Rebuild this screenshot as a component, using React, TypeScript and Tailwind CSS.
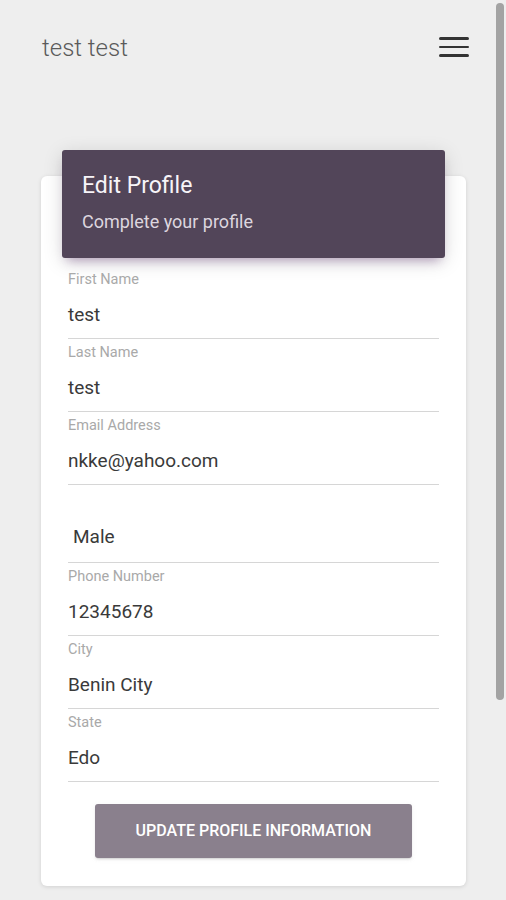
import { useState } from 'react';

interface FieldProps {
    label: string;
    value: string;
}

function Field({ label, value }: FieldProps) {
    return (
        <div className="pt-[6px] border-b border-[#d6d6d6]">
            <div className="text-[14.5px] leading-4 text-[#a9a9a9]">{label}</div>
            <div className="h-[50px] pt-[4px] flex items-center text-[19px] text-[#3a3a3a]">{value}</div>
        </div>
    );
}

function App() {
    const [gender] = useState('Male');

    return (
        <div className="min-h-screen bg-[#eeeeee] font-['Roboto',sans-serif] relative">
            <div className="flex items-center justify-between pl-[42px] pr-[37px] pt-[32px] h-[64px]">
                <span className="text-[24px] font-light text-[#5a5a5a] leading-[30px]">test test</span>
                <button type="button" className="flex flex-col gap-[6px] w-[30px] -mt-[2px]">
                    <span className="h-[2.5px] bg-[#333] rounded-full" />
                    <span className="h-[2.5px] bg-[#333] rounded-full" />
                    <span className="h-[2.5px] bg-[#333] rounded-full" />
                </button>
            </div>

            <div className="flex flex-col ml-[41px] w-[425px] mt-[112px] bg-white rounded-[6px] shadow-[0_1px_4px_0_rgba(0,0,0,0.12)] px-[21px] pb-[28px]">
                <div className="-mt-[26px] h-[108px] bg-[#524559] rounded-[3px] px-[20px] pt-[20px] shadow-[0_4px_20px_0_rgba(0,0,0,0.14),0_7px_10px_-5px_rgba(120,70,140,0.45)]">
                    <h2 className="text-[23px] font-normal text-[#f7f4f8] leading-[32px]">Edit Profile</h2>
                    <p className="mt-[9px] text-[18px] font-normal text-[#ddd6df] leading-[22px]">Complete your profile</p>
                </div>

                <div className="px-[6px] mt-[8px]">
                    <Field label="First Name" value="test" />
                    <Field label="Last Name" value="test" />
                    <Field label="Email Address" value="nkke@yahoo.com" />
                    <div className="h-[78px] pt-[40px] border-b border-[#d6d6d6]">
                        <div className="pl-[5px] text-[19px] leading-6 text-[#3a3a3a]">{gender}</div>
                    </div>
                    <Field label="Phone Number" value="12345678" />
                    <Field label="City" value="Benin City" />
                    <Field label="State" value="Edo" />
                </div>

                <div className="flex justify-center mt-[22px]">
                    <button
                        type="button"
                        className="w-[317px] h-[54px] rounded-[3px] bg-[#8a808d] text-white text-[16px] font-medium uppercase shadow-[0_2px_2px_0_rgba(153,153,153,0.14),0_3px_1px_-2px_rgba(153,153,153,0.2),0_1px_5px_0_rgba(153,153,153,0.12)]"
                    >
                        Update Profile Information
                    </button>
                </div>
            </div>

            <div className="fixed right-[2px] top-[3px] w-[8px] h-[697px] rounded-full bg-[#a3a3a3]" />
        </div>
    );
}

export default App;
